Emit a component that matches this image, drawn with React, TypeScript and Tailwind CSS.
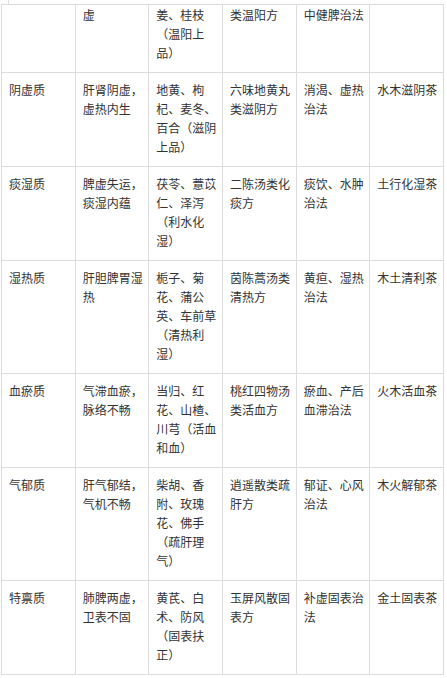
import React from 'react'

type Row = string[][]

// each cell is a list of visual lines, as wrapped in the screenshot
const rows: Row[] = [
  [[], ['虚'], ['姜、桂枝', '（温阳上', '品）'], ['类温阳方'], ['中健脾治法'], []],
  [['阴虚质'], ['肝肾阴虚，', '虚热内生'], ['地黄、枸', '杞、麦冬、', '百合（滋阴', '上品）'], ['六味地黄丸', '类滋阴方'], ['消渴、虚热', '治法'], ['水木滋阴茶']],
  [['痰湿质'], ['脾虚失运，', '痰湿内蕴'], ['茯苓、薏苡', '仁、泽泻', '（利水化', '湿）'], ['二陈汤类化', '痰方'], ['痰饮、水肿', '治法'], ['土行化湿茶']],
  [['湿热质'], ['肝胆脾胃湿', '热'], ['栀子、菊', '花、蒲公', '英、车前草', '（清热利', '湿）'], ['茵陈蒿汤类', '清热方'], ['黄疸、湿热', '治法'], ['木土清利茶']],
  [['血瘀质'], ['气滞血瘀，', '脉络不畅'], ['当归、红', '花、山楂、', '川芎（活血', '和血）'], ['桃红四物汤', '类活血方'], ['瘀血、产后', '血滞治法'], ['火木活血茶']],
  [['气郁质'], ['肝气郁结，', '气机不畅'], ['柴胡、香', '附、玫瑰', '花、佛手', '（疏肝理', '气）'], ['逍遥散类疏', '肝方'], ['郁证、心风', '治法'], ['木火解郁茶']],
  [['特禀质'], ['肺脾两虚，', '卫表不固'], ['黄芪、白', '术、防风', '（固表扶', '正）'], ['玉屏风散固', '表方'], ['补虚固表治', '法'], ['金土固表茶']],
]

export default function App() {
  return (
    <div
      className="w-[447px] h-[678px] overflow-hidden bg-white text-[#333] text-[12px] leading-[19px]"
      style={{ fontFamily: '"Noto Sans CJK SC", "Noto Sans", sans-serif' }}
    >
      {/* tail of the element above the table */}
      <div className="h-[4px] flex">
        <div className="w-[9px] border-r border-[#dcdcdc]" />
      </div>

      <table className="ml-px w-[443px] table-fixed border-collapse">
        <tbody>
          {rows.map((row, ri) => (
            <tr key={ri}>
              {row.map((cell, ci) => (
                <td
                  key={ci}
                  className={
                    ri === 0
                      ? 'align-top border border-[#dcdcdc] px-[7px] pt-0 pb-[10px]'
                      : 'align-top border border-[#dcdcdc] px-[7px] pt-[7px] pb-[10px]'
                  }
                >
                  {cell.map((line, li) => (
                    <div key={li} className="whitespace-nowrap">
                      {line}
                    </div>
                  ))}
                  {cell.length === 0 && <div>&nbsp;</div>}
                </td>
              ))}
            </tr>
          ))}
        </tbody>
      </table>
    </div>
  )
}
